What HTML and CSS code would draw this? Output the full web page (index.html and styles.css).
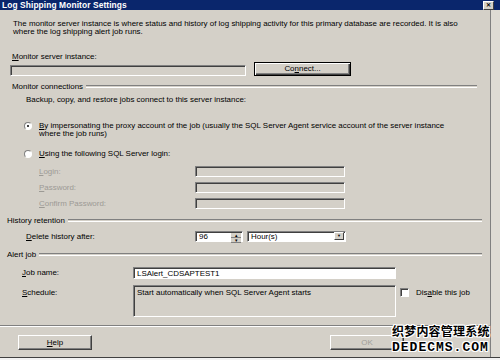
FILE: index.html
```html
<!DOCTYPE html>
<html lang="en">
<head>
    <meta charset="UTF-8">
    <meta name="viewport" content="width=device-width, initial-scale=1.0">
    <title>Log Shipping Monitor Settings</title>
    <link rel="stylesheet" href="styles.css">
</head>
<body>
<div class="window">
    <div class="titlebar">
        <span class="title">Log Shipping Monitor Settings</span>
        <span class="close">&#x2715;</span>
    </div>
    <div class="frame">
        <div class="client">
            <p class="desc">The monitor server instance is where status and history of log shipping activity for this primary database are recorded. It is also<br>where the log shipping alert job runs.</p>

            <div class="instance-label"><u>M</u>onitor server instance:</div>
            <div class="instance-row">
                <div class="field disabled instance-field"></div>
                <div class="button default connect">Co<u>n</u>nect...</div>
            </div>

            <div class="group g-monitor"><span>Monitor connections</span><i></i></div>
            <p class="note">Backup, copy, and restore jobs connect to this server instance:</p>

            <div class="radio-row r1">
                <span class="radio checked"></span>
                <span><u>B</u>y impersonating the proxy account of the job (usually the SQL Server Agent service account of the server instance<br>where the job runs)</span>
            </div>
            <div class="radio-row r2">
                <span class="radio"></span>
                <span><u>U</u>sing the following SQL Server login:</span>
            </div>

            <div class="creds">
                <label class="dim"><u>L</u>ogin:</label>
                <div class="field disabled"></div>
                <label class="dim"><u>P</u>assword:</label>
                <div class="field disabled"></div>
                <label class="dim"><u>C</u>onfirm Password:</label>
                <div class="field disabled"></div>
            </div>

            <div class="group g-history"><span>History retention</span><i></i></div>
            <div class="delete-row">
                <label><u>D</u>elete history after:</label>
                <div class="field spin">
                    <span>96</span>
                    <span class="spin-btns"><b>&#9652;</b><b>&#9662;</b></span>
                </div>
                <div class="field combo">
                    <span>Hour(s)</span>
                    <span class="drop">&#9660;</span>
                </div>
            </div>

            <div class="group g-alert"><span>Alert job</span><i></i></div>
            <div class="job-row">
                <label><u>J</u>ob name:</label>
                <div class="field white job-field">LSAlert_CDSAPTEST1</div>
            </div>
            <div class="schedule-row">
                <label><u>S</u>chedule:</label>
                <div class="field disabled schedule-field">Start automatically when SQL Server Agent starts</div>
                <span class="checkbox"></span>
                <span class="check-label">Dis<u>a</u>ble this job</span>
            </div>

            <div class="separator"></div>
            <div class="button-row">
                <div class="button"><u>H</u>elp</div>
                <div class="button ok">OK</div>
            </div>
        </div>
        <div class="edge"></div>
    </div>
    <div class="watermark">
        <div class="wm-cn">织梦内容管理系统</div>
        <div class="wm-en">DEDECMS.COM</div>
    </div>
</div>
</body>
</html>
```

FILE: styles.css
```css
body {
    margin: 0;
    background: #f2f2f2;
    font-family: "Liberation Sans", Arial, sans-serif;
    font-size: 7.95px;
    line-height: 8px;
    color: #000;
}

p {
    margin: 0;
}

u {
    text-decoration-thickness: 1px;
    text-underline-offset: 1px;
}

.window {
    position: relative;
    width: 500px;
    height: 357px;
    background: #d4d0c8;
    border-bottom: 1px solid #404040;
    box-shadow: 0 1px 0 #9a9a9a;
}

.titlebar {
    height: 10px;
    background: #0a266c;
    display: flex;
    align-items: center;
    justify-content: space-between;
    padding: 0 6px 0 2px;
}

.title {
    color: #fff;
    font-weight: bold;
    font-size: 8.4px;
    letter-spacing: 0.1px;
}

.close {
    width: 9px;
    height: 7px;
    background: #d4d0c8;
    border: 1px solid;
    border-color: #fff #404040 #404040 #fff;
    font-size: 6px;
    line-height: 7px;
    text-align: center;
    font-weight: bold;
}

.frame {
    display: flex;
    height: 347px;
}

.client {
    width: 490px;
    border-right: 1px solid #808080;
    box-shadow: 1px 0 0 #fff;
}

.edge {
    flex: 1;
    background: #dedbd4;
}

/* sunken fields */
.field {
    box-sizing: border-box;
    height: 11px;
    border: 1px solid;
    border-color: #808080 #fff #fff #808080;
    box-shadow: inset 1px 1px #404040;
    background: #fff;
    padding: 1px 3px 0;
    white-space: nowrap;
}

.field.disabled {
    background: #d4d0c8;
}

/* raised buttons */
.button {
    box-sizing: border-box;
    height: 15px;
    border: 1px solid;
    border-color: #fff #404040 #404040 #fff;
    box-shadow: inset -1px -1px #808080;
    text-align: center;
    line-height: 13px;
}

.button.default {
    border-color: #000;
    box-shadow: inset 1px 1px #fff, inset -1px -1px #404040, inset -2px -2px #808080;
}

.desc {
    margin: 10px 0 0 13px;
}

.instance-label {
    margin: 17px 0 0 12px;
}

.instance-row {
    display: flex;
    align-items: flex-end;
    margin: 1px 0 0 10px;
    height: 14px;
}

.instance-field {
    width: 236px;
}

.connect {
    width: 97px;
    height: 14px;
    margin-left: 8px;
    line-height: 12px;
}

.group {
    display: flex;
    align-items: center;
    height: 9px;
}

.group i {
    flex: 1;
    height: 1px;
    margin-left: 3px;
    border-top: 1px solid #808080;
    border-bottom: 1px solid #fff;
}

.g-monitor {
    margin: 6px 13px 0 12px;
}

.note {
    margin: 5px 0 0 26px;
}

.radio-row {
    display: flex;
    align-items: flex-start;
    gap: 7px;
    margin-left: 24px;
}

.r1 {
    margin-top: 18px;
}

.r2 {
    margin-top: 12px;
}

.radio {
    box-sizing: border-box;
    position: relative;
    width: 8px;
    height: 8px;
    border-radius: 50%;
    border: 1px solid;
    border-color: #808080 #fff #fff #808080;
    background: #fff;
    flex: none;
}

.radio.checked::after {
    content: "";
    position: absolute;
    left: 2px;
    top: 2px;
    width: 2px;
    height: 2px;
    border-radius: 50%;
    background: #000;
}

.creds {
    display: grid;
    grid-template-columns: 156px 150px;
    row-gap: 5px;
    align-items: center;
    margin: 8px 0 0 39px;
}

.dim {
    color: #9c9a95;
}

.g-history {
    margin: 7px 8px 0 7px;
}

.delete-row {
    display: flex;
    align-items: center;
    margin: 6px 0 0 26px;
    height: 11px;
}

.delete-row label {
    width: 169px;
}

.spin {
    display: flex;
    justify-content: space-between;
    width: 48px;
    padding: 1px 1px 0 3px;
}

.spin-btns {
    display: flex;
    flex-direction: column;
    width: 10px;
}

.spin-btns b {
    height: 4px;
    background: #d4d0c8;
    font-size: 5px;
    line-height: 4px;
    text-align: center;
    font-weight: normal;
    border-bottom: 1px solid #808080;
}

.combo {
    display: flex;
    justify-content: space-between;
    width: 99px;
    margin-left: 4px;
    padding: 1px 1px 0 3px;
}

.drop {
    width: 10px;
    height: 8px;
    margin-top: -1px;
    background: #d4d0c8;
    border: 1px solid;
    border-color: #fff #404040 #404040 #fff;
    box-sizing: border-box;
    font-size: 4px;
    line-height: 6px;
    text-align: center;
}

.g-alert {
    margin: 8px 8px 0 7px;
}

.job-row {
    display: flex;
    align-items: center;
    margin: 8px 0 0 22px;
    height: 12px;
}

.job-row label,
.schedule-row label {
    width: 111px;
}

.job-field {
    width: 263px;
    height: 12px;
    line-height: 9px;
}

.schedule-row {
    display: flex;
    align-items: flex-start;
    margin: 6px 0 0 22px;
}

.schedule-row label {
    padding-top: 4px;
}

.schedule-field {
    width: 263px;
    height: 32px;
    padding: 3px 3px 0;
}

.checkbox {
    box-sizing: border-box;
    width: 9px;
    height: 9px;
    margin: 3px 0 0 4px;
    border: 1px solid;
    border-color: #808080 #fff #fff #808080;
    box-shadow: inset 1px 1px #404040;
    background: #fff;
}

.check-label {
    margin: 4px 0 0 7px;
}

.separator {
    margin: 8px 0 0;
    border-top: 1px solid #808080;
    border-bottom: 1px solid #fff;
}

.button-row {
    display: flex;
    gap: 238px;
    margin: 8px 0 0 18px;
}

.button-row .button {
    width: 74px;
}

.ok {
    color: #a09e99;
}

/* watermark stamped over the dialog corner */
.watermark {
    position: absolute;
    left: 392px;
    top: 325px;
    width: 98px;
    color: #000;
    font-weight: bold;
    text-shadow: 1px 0 #fff, -1px 0 #fff, 0 1px #fff, 0 -1px #fff,
                 1px 1px #fff, -1px -1px #fff, 1px -1px #fff, -1px 1px #fff;
}

.wm-cn {
    font-family: "Liberation Sans", "Noto Sans CJK SC", sans-serif;
    font-size: 12px;
    line-height: 14.5px;
    letter-spacing: 0.2px;
}

.wm-en {
    font-family: "Liberation Mono", monospace;
    font-size: 13px;
    line-height: 15px;
    letter-spacing: 1px;
}
```
